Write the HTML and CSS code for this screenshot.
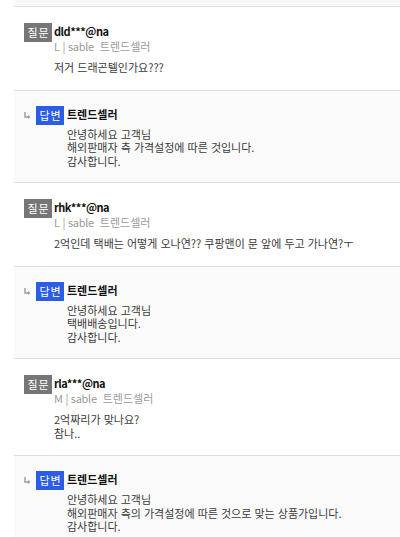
FILE: index.html
```html
<!DOCTYPE html>
<html lang="ko">
<head>
<meta charset="utf-8">
<link rel="stylesheet" href="styles.css">
</head>
<body>
<div class="list">
  <div class="prev"></div>

  <div class="qa q">
    <span class="badge badge-q">질문</span>
    <div class="body">
      <div class="name name-id">dld***@na</div>
      <div class="meta"><span class="opt">L | sable</span><span class="seller">트렌드셀러</span></div>
      <p class="text">저거 드래곤텔인가요???</p>
    </div>
  </div>

  <div class="qa a">
    <svg class="arrow" width="7" height="7" viewBox="0 0 7 7"><path d="M1 0v5h4" fill="none" stroke="#9a9a9a" stroke-width="1.4"/><path d="M4 3l2.5 2L4 7z" fill="#9a9a9a"/></svg>
    <span class="badge badge-a">답변</span>
    <div class="body">
      <div class="name">트렌드셀러</div>
      <p class="text">안녕하세요 고객님<br>해외판매자 측 가격설정에 따른 것입니다.<br>감사합니다.</p>
    </div>
  </div>

  <div class="qa q">
    <span class="badge badge-q">질문</span>
    <div class="body">
      <div class="name name-id">rhk***@na</div>
      <div class="meta"><span class="opt">L | sable</span><span class="seller">트렌드셀러</span></div>
      <p class="text">2억인데 택배는 어떻게 오나연?? 쿠팡맨이 문 앞에 두고 가나연?ㅜ</p>
    </div>
  </div>

  <div class="qa a">
    <svg class="arrow" width="7" height="7" viewBox="0 0 7 7"><path d="M1 0v5h4" fill="none" stroke="#9a9a9a" stroke-width="1.4"/><path d="M4 3l2.5 2L4 7z" fill="#9a9a9a"/></svg>
    <span class="badge badge-a">답변</span>
    <div class="body">
      <div class="name">트렌드셀러</div>
      <p class="text">안녕하세요 고객님<br>택배배송입니다.<br>감사합니다.</p>
    </div>
  </div>

  <div class="qa q">
    <span class="badge badge-q">질문</span>
    <div class="body">
      <div class="name name-id">rla***@na</div>
      <div class="meta"><span class="opt">M | sable</span><span class="seller">트렌드셀러</span></div>
      <p class="text">2억짜리가 맞나요?<br>참나..</p>
    </div>
  </div>

  <div class="qa a">
    <svg class="arrow" width="7" height="7" viewBox="0 0 7 7"><path d="M1 0v5h4" fill="none" stroke="#9a9a9a" stroke-width="1.4"/><path d="M4 3l2.5 2L4 7z" fill="#9a9a9a"/></svg>
    <span class="badge badge-a">답변</span>
    <div class="body">
      <div class="name">트렌드셀러</div>
      <p class="text">안녕하세요 고객님<br>해외판매자 측의 가격설정에 따른 것으로 맞는 상품가입니다.<br>감사합니다.</p>
    </div>
  </div>
</div>
</body>
</html>
```
FILE: styles.css
```css
html, body {
  margin: 0;
  padding: 0;
  background: #fff;
}
body {
  font-family: "Noto Sans CJK KR", "Noto Sans", sans-serif;
  font-size: 11px;
  color: #3a3a3a;
  overflow: hidden;
}
.list {
  margin-left: 14px;
}
.prev {
  height: 6px;
  background: #f8f8f8;
  border-bottom: 1px solid #dedede;
}
.qa {
  display: flex;
  align-items: flex-start;
  border-bottom: 1px solid #dedede;
  padding-left: 10px;
}
.q {
  background: #fff;
  padding-top: 16px;
  padding-bottom: 15px;
}
.a {
  background: #fafafa;
  padding-top: 15px;
  padding-bottom: 14px;
}
.arrow {
  display: block;
  margin-top: 6px;
  margin-right: 5px;
  flex: none;
}
.badge {
  flex: none;
  width: 28px;
  height: 19px;
  line-height: 19px;
  text-align: center;
  color: #fff;
  font-size: 11px;
  letter-spacing: 1px;
  text-indent: 1px;
  margin-right: 2px;
}
.badge-q { background: #767676; }
.badge-a { background: #2c5ce4; margin-right: 3px; }
.body {
  flex: 1;
  min-width: 0;
}
.name {
  font-weight: bold;
  color: #111;
  line-height: 16px;
  font-size: 11px;
}
.name-id {
  letter-spacing: -0.5px;
}
.meta {
  color: #9a9a9a;
  line-height: 14px;
}
.opt {
  letter-spacing: -0.3px;
}
.seller {
  margin-left: 6px;
}
.text {
  margin: 8px 0 0;
  line-height: 13.5px;
  color: #3a3a3a;
  white-space: nowrap;
}
.a .text {
  margin-top: 6px;
}
```
